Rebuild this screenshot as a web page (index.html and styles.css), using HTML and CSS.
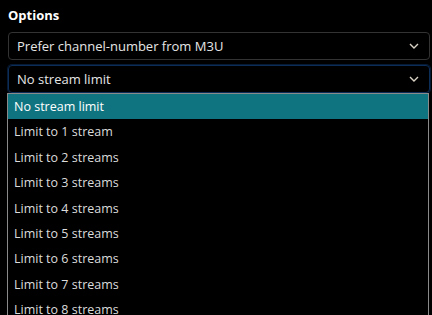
FILE: index.html
```html
<!DOCTYPE html>
<html lang="en">
<head>
    <meta charset="UTF-8">
    <title>Options</title>
    <link rel="stylesheet" href="styles.css">
</head>
<body>
    <div class="options">
        <h3>Options</h3>

        <div class="select">
            <span>Prefer channel-number from M3U</span>
            <svg class="chevron" width="10" height="6" viewBox="0 0 10 6"><path d="M1 1 L5 5 L9 1" fill="none" stroke="#d9d2c5" stroke-width="1.4"/></svg>
        </div>

        <div class="select-wrap">
            <div class="select focused">
                <span>No stream limit</span>
                <svg class="chevron" width="10" height="6" viewBox="0 0 10 6"><path d="M1 1 L5 5 L9 1" fill="none" stroke="#d9d2c5" stroke-width="1.4"/></svg>
            </div>

            <!-- open dropdown list -->
            <ul class="dropdown">
                <li class="active">No stream limit</li>
                <li>Limit to 1 stream</li>
                <li>Limit to 2 streams</li>
                <li>Limit to 3 streams</li>
                <li>Limit to 4 streams</li>
                <li>Limit to 5 streams</li>
                <li>Limit to 6 streams</li>
                <li>Limit to 7 streams</li>
                <li>Limit to 8 streams</li>
            </ul>
        </div>
    </div>
</body>
</html>
```

FILE: styles.css
```css
html {
    background: #000;
}
body {
    margin: 0;
    height: 315px;
    overflow: hidden;
    background: #000;
    color: #e6e6e6;
    font-family: 'Open Sans', 'Noto Sans', sans-serif;
    font-size: 13px;
}
.options {
    padding: 5px 2px 0 8px;
}
h3 {
    margin: 0 0 7px 0;
    font-size: 13px;
    font-weight: 700;
    color: #fff;
    line-height: 20px;
}
.select {
    display: flex;
    align-items: center;
    justify-content: space-between;
    height: 26px;
    padding: 0 10px 0 8px;
    border: 1px solid #333;
    border-radius: 4px;
    margin-bottom: 5px;
}
.select.focused {
    border-color: #0c2d57;
    box-shadow: 0 0 0 1px #071a33;
    margin-bottom: 0;
}
.chevron {
    display: block;
}
.select-wrap {
    position: relative;
}
.dropdown {
    position: absolute;
    z-index: 5;
    top: 28px;
    left: -1px;
    right: 1px;
    margin: 0;
    padding: 0;
    list-style: none;
    background: #000;
    border: 1px solid #8a8a8a;
    font-size: 12.5px;
}
.dropdown li {
    height: 25.4px;
    line-height: 25px;
    padding-left: 6px;
    color: #dcdcdc;
}
.dropdown li.active {
    background: #0f7480;
    color: #fff;
}
```
